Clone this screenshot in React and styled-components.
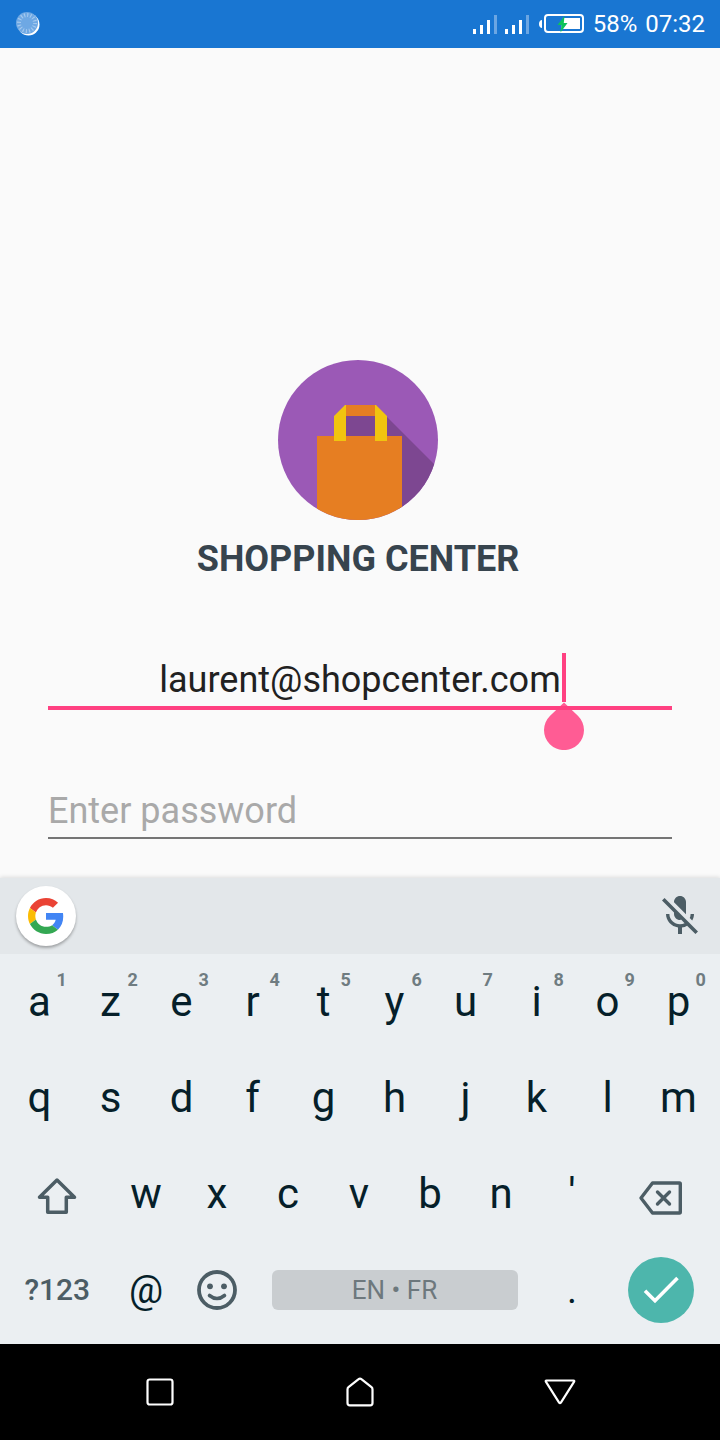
import React from "react";
import styled, { createGlobalStyle } from "styled-components";

const color = {
  primary: "#1976d2",
  accent: "#ff4081",
  page: "#fafafa",
  title: "#37444e",
  key: "#061f2a",
  keyMuted: "#4c5d65",
  hint: "#6f7c81",
};

const GlobalStyle = createGlobalStyle`
  *, *::before, *::after { box-sizing: border-box; }
  body { margin: 0; background: ${color.page}; font-family: Roboto, "Noto Sans", sans-serif; }
  button { border: 0; padding: 0; background: none; font-family: inherit; cursor: pointer; }
  svg { display: block; flex: none; }
`;

const Screen = styled.div`
  display: flex;
  flex-direction: column;
  min-height: 100vh;
`;

const StatusBar = styled.header`
  display: flex;
  align-items: center;
  justify-content: space-between;
  height: 48px;
  padding: 0 15px 0 16px;
  background: ${color.primary};
  color: #fff;
`;

const StatusGroup = styled.div`
  display: flex;
  align-items: center;
  gap: 8px;
  font-size: 24px;
  line-height: 28px;
`;

const Content = styled.main`
  flex: 1;
  display: flex;
  flex-direction: column;
  justify-content: flex-end;
  padding: 48px 48px 39px;
`;

const Brand = styled.div`
  display: flex;
  flex-direction: column;
  align-items: center;
  gap: 18px;
  padding-right: 4px;
`;

const Title = styled.h1`
  margin: 0;
  color: ${color.title};
  font-size: 36px;
  line-height: 42px;
  font-weight: 700;
`;

const Form = styled.form`
  display: flex;
  flex-direction: column;
  gap: 77px;
  margin-top: 76px;
`;

const Field = styled.label`
  position: relative;
  display: block;
  padding-bottom: 2px;
  border-bottom: ${(p) => (p.$focused ? `4px solid ${color.accent}` : "2px solid #757575")};
`;

const TextInput = styled.input`
  display: block;
  width: 100%;
  height: 48px;
  padding: 0;
  border: 0;
  outline: 0;
  background: none;
  color: #212121;
  font-family: inherit;
  font-size: 36px;
  text-align: ${(p) => (p.$centered ? "center" : "left")};

  &::placeholder {
    color: #a9a9a9;
    opacity: 1;
  }
`;

const Caret = styled.span`
  position: absolute;
  top: -3px;
  left: calc(50% + 202px);
  width: 4px;
  height: 49px;
  background: ${color.accent};
`;

const CaretHandle = styled.svg`
  position: absolute;
  top: 100%;
  left: calc(50% + 184px);
  margin-top: -4px;
`;

const Keyboard = styled.section`
  background: #ebeff2;
  box-shadow: 0 -1px 4px rgba(0, 0, 0, 0.12);
`;

const Suggestions = styled.div`
  display: flex;
  align-items: center;
  justify-content: space-between;
  height: 76px;
  padding: 0 16px;
  background: #e3e7ea;
`;

const GoogleButton = styled.button`
  display: grid;
  place-items: center;
  width: 60px;
  height: 60px;
  border-radius: 50%;
  background: #fff;
  box-shadow: 0 2px 3px rgba(0, 0, 0, 0.3);
`;

const IconButton = styled.button`
  display: grid;
  place-items: center;
`;

const Keys = styled.div`
  padding: 0 6px 6px 4px;
`;

const KeyRow = styled.div`
  display: grid;
  grid-template-columns: repeat(20, minmax(0, 1fr));
  height: 96px;
`;

const Key = styled.button`
  position: relative;
  grid-column: span ${(p) => p.$span || 2};
  display: flex;
  align-items: center;
  justify-content: center;
  color: ${(p) => (p.$muted ? color.keyMuted : color.key)};
  font-size: ${(p) => p.$size || 42}px;
  font-weight: ${(p) => (p.$muted ? 500 : 400)};
  line-height: 48px;
`;

const KeyHint = styled.span`
  position: absolute;
  top: 16px;
  left: calc(50% + 17px);
  color: ${color.hint};
  font-size: 18px;
  line-height: 20px;
  font-weight: 700;
`;

const SpaceBar = styled.span`
  flex: 1;
  margin: 0 19px;
  border-radius: 6px;
  background: #c9cdd0;
  color: #6d787d;
  font-size: 26px;
  line-height: 40px;
`;

const EnterDisc = styled.span`
  display: grid;
  place-items: center;
  width: 66px;
  height: 66px;
  border-radius: 50%;
  background: #4db6ac;
`;

const NavBar = styled.nav`
  display: grid;
  grid-template-columns: repeat(3, 1fr);
  height: 96px;
  padding: 0 60px;
  background: #000;
`;

const SyncIcon = () => (
  <svg width="24" height="24" viewBox="0 0 24 24" aria-hidden="true">
    <circle cx="12.500" cy="12.500" r="11" fill="#fff" />
    <circle cx="11" cy="11" r="11" fill="#6ea8e4" />
    <circle cx="11" cy="11" r="8" fill="none" stroke="#a5c9ee" strokeWidth="4" strokeDasharray="1.100 2.041" />
  </svg>
);

const SignalIcon = () => (
  <svg width="24" height="20" viewBox="0 0 24 20" aria-hidden="true">
    <path d="M0 15h3v5H0zM7 11h3v9H7zM14 6h3v14h-3z" fill="#fff" />
    <path d="M21 1h3v19h-3z" fill="#6ba6e3" />
  </svg>
);

const BatteryIcon = () => (
  <svg width="48" height="20" viewBox="-2 0 48 20" aria-hidden="true">
    <path d="M3 6v8c-1.500 0-3-1.500-3-4s1.500-4 3-4z" fill="#fff" />
    <rect x="6" y="1" width="38" height="17" rx="3" fill="none" stroke="#fff" strokeWidth="2" />
    <path d="M24 4h17v11H22z" fill="#fff" />
    <path d="M25.500 2L18.500 11H22.500L21.500 18.500L28.500 9H24.800z" fill="#0cc25a" />
  </svg>
);

const BagLogo = () => (
  <svg width="160" height="160" viewBox="0 0 160 160" role="img" aria-label="Shopping bag">
    <clipPath id="disc">
      <circle cx="80" cy="80" r="80" />
    </clipPath>
    <g clipPath="url(#disc)">
      <rect width="160" height="160" fill="#9b59b6" />
      <path d="M67 56h30v21H67zM97 45l63 63v52h-40V76H97z" fill="#7d4791" />
      <path d="M39 76h85v84H39zM67 45h31v11H67z" fill="#e67e22" />
      <path d="M56 56l11-11h1v36H56zM97 45h1l11 11v25H97z" fill="#f1c40f" />
    </g>
  </svg>
);

const GoogleIcon = () => (
  <svg width="36" height="36" viewBox="0 0 48 48" aria-hidden="true">
    <path fill="#EA4335" d="M24 9.500c3.540 0 6.710 1.220 9.210 3.600l6.850-6.850C35.900 2.380 30.470 0 24 0 14.620 0 6.510 5.380 2.560 13.220l7.980 6.190C12.430 13.720 17.740 9.500 24 9.500z" />
    <path fill="#4285F4" d="M46.980 24.550c0-1.570-.15-3.090-.38-4.550H24v9.020h12.940c-.58 2.960-2.260 5.480-4.780 7.180l7.730 6c4.510-4.180 7.090-10.360 7.090-17.650z" />
    <path fill="#FBBC05" d="M10.530 28.590c-.48-1.450-.76-2.990-.76-4.590s.27-3.140.76-4.590l-7.980-6.190C.92 16.460 0 20.120 0 24c0 3.880.92 7.540 2.560 10.780l7.970-6.190z" />
    <path fill="#34A853" d="M24 48c6.480 0 11.930-2.130 15.890-5.810l-7.730-6c-2.150 1.450-4.920 2.300-8.160 2.300-6.260 0-11.570-4.220-13.470-9.910l-7.980 6.190C6.510 42.620 14.620 48 24 48z" />
  </svg>
);

const MicOffIcon = () => (
  <svg width="48" height="48" viewBox="0 0 24 24" fill={color.keyMuted} aria-hidden="true">
    <path d="M19 11h-1.700c0 .74-.16 1.430-.43 2.050l1.230 1.230c.56-.98.9-2.090.9-3.280zm-4.020.17c0-.06.02-.11.02-.17V5c0-1.660-1.340-3-3-3S9 3.340 9 5v.18l5.980 5.990zM4.270 3L3 4.270l6.010 6.010V11c0 1.660 1.330 3 2.990 3 .22 0 .44-.03.65-.08l1.660 1.660c-.71.33-1.500.52-2.310.52-2.760 0-5.300-2.100-5.300-5.100H5c0 3.410 2.720 6.230 6 6.720V21h2v-3.280c.91-.13 1.770-.45 2.540-.9L19.730 21 21 19.730 4.270 3z" />
  </svg>
);

const ShiftIcon = () => (
  <svg width="48" height="48" viewBox="0 0 48 48" fill="none" stroke={color.keyMuted} strokeWidth="3.500" strokeLinejoin="round" aria-hidden="true">
    <path d="M24 10L41.500 27.200H33.300V42.300H14.700V27.200H6.500z" />
  </svg>
);

const BackspaceIcon = () => (
  <svg width="48" height="48" viewBox="0 0 48 48" fill="none" stroke={color.keyMuted} strokeWidth="3.400" strokeLinejoin="round" strokeLinecap="round" aria-hidden="true">
    <path d="M15.500 13H42.500Q43.300 13 43.300 14V42Q43.300 43 42.500 43H15.500L4 28z" />
    <path d="M20.500 22l12 12M32.500 22l-12 12" strokeWidth="3.400" />
  </svg>
);

const SmileIcon = () => (
  <svg width="40" height="40" viewBox="0 0 40 40" aria-hidden="true">
    <circle cx="20" cy="20" r="18" fill="none" stroke={color.keyMuted} strokeWidth="3.800" />
    <circle cx="13" cy="16.300" r="2.900" fill={color.keyMuted} />
    <circle cx="27" cy="16.300" r="2.900" fill={color.keyMuted} />
    <path d="M12.500 25.500Q20 31.500 27.500 25.500" fill="none" stroke={color.keyMuted} strokeWidth="3.600" strokeLinecap="round" />
  </svg>
);

const CheckIcon = () => (
  <svg width="36" height="28" viewBox="0 0 36 28" fill="none" stroke="#fff" strokeWidth="3.600" aria-hidden="true">
    <path d="M2 14.800L12 24.800L34.500 2" />
  </svg>
);

const NavIcon = ({ d }) => (
  <svg width="32" height="32" viewBox="0 0 32 32" fill="none" stroke="#fff" strokeWidth="2.200" strokeLinejoin="round" aria-hidden="true">
    <path d={d} />
  </svg>
);

const topRow = [..."azertyuiop"];
const homeRow = [..."qsdfghjklm"];
const lowerRow = [..."wxcvbn'"];

const navItems = [
  { label: "Recent apps", d: "M5.800 3.500H26.200Q28.500 3.500 28.500 5.800V26.200Q28.500 28.500 26.200 28.500H5.800Q3.500 28.500 3.500 26.200V5.800Q3.500 3.500 5.800 3.500z" },
  { label: "Home", d: "M14.600 3.200Q16 2 17.400 3.200L27.500 11.200Q28.500 12 28.500 13.500V27Q28.500 29.300 26.200 29.300H5.800Q3.500 29.300 3.500 27V13.500Q3.500 12 4.500 11.200z" },
  { label: "Back", d: "M2.500 4.500H29.500Q30.800 4.500 30 5.900L16.900 26.600Q16 27.800 15.100 26.600L2 5.900Q1.200 4.500 2.500 4.500z" },
];

export default function App() {
  return (
    <Screen>
      <GlobalStyle />
      <StatusBar>
        <SyncIcon />
        <StatusGroup>
          <SignalIcon />
          <SignalIcon />
          <BatteryIcon />
          <span>58%</span>
          <time>07:32</time>
        </StatusGroup>
      </StatusBar>

      <Content>
        <Brand>
          <BagLogo />
          <Title>SHOPPING CENTER</Title>
        </Brand>
        <Form onSubmit={(e) => e.preventDefault()}>
          <Field $focused>
            <TextInput type="text" aria-label="Email" defaultValue="laurent@shopcenter.com" $centered />
            <Caret />
            <CaretHandle width="40" height="48" viewBox="0 0 40 48" fill={color.accent} fillOpacity="0.85" aria-hidden="true">
              <path d="M20 0.500L34.100 13.900A20 20 0 1 1 5.900 13.900z" />
            </CaretHandle>
          </Field>
          <Field>
            <TextInput type="password" aria-label="Password" placeholder="Enter password" />
          </Field>
        </Form>
      </Content>

      <Keyboard aria-label="Keyboard">
        <Suggestions>
          <GoogleButton type="button" aria-label="Google search">
            <GoogleIcon />
          </GoogleButton>
          <IconButton type="button" aria-label="Voice input off">
            <MicOffIcon />
          </IconButton>
        </Suggestions>
        <Keys>
          <KeyRow>
            {topRow.map((letter, i) => (
              <Key key={letter} type="button">
                {letter}
                <KeyHint>{(i + 1) % 10}</KeyHint>
              </Key>
            ))}
          </KeyRow>
          <KeyRow>
            {homeRow.map((letter) => (
              <Key key={letter} type="button">{letter}</Key>
            ))}
          </KeyRow>
          <KeyRow>
            <Key type="button" aria-label="Shift" $span={3}><ShiftIcon /></Key>
            {lowerRow.map((letter) => (
              <Key key={letter} type="button">{letter}</Key>
            ))}
            <Key type="button" aria-label="Backspace" $span={3}><BackspaceIcon /></Key>
          </KeyRow>
          <KeyRow>
            <Key type="button" $span={3} $size={30} $muted>?123</Key>
            <Key type="button" $size={38}>@</Key>
            <Key type="button" aria-label="Emoji"><SmileIcon /></Key>
            <Key type="button" $span={8}><SpaceBar>EN • FR</SpaceBar></Key>
            <Key type="button" $size={38}>.</Key>
            <Key type="button" aria-label="Done" $span={3}>
              <EnterDisc><CheckIcon /></EnterDisc>
            </Key>
          </KeyRow>
        </Keys>
      </Keyboard>

      <NavBar>
        {navItems.map((item) => (
          <IconButton key={item.label} type="button" aria-label={item.label}>
            <NavIcon d={item.d} />
          </IconButton>
        ))}
      </NavBar>
    </Screen>
  );
}
